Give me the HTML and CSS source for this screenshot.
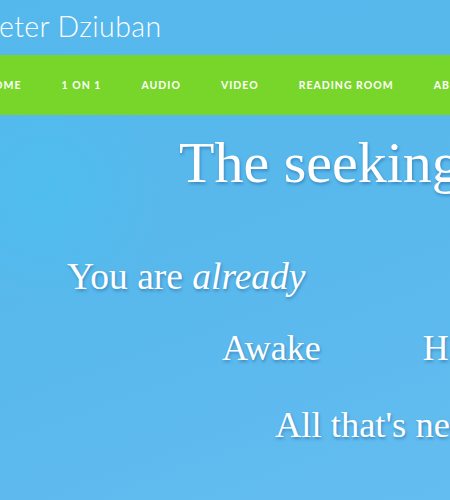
FILE: index.html
```html
<!DOCTYPE html>
<html lang="en">
<head>
<meta charset="utf-8">
<title>Peter Dziuban</title>
<link rel="stylesheet" href="styles.css">
</head>
<body>
<div class="page">
  <header class="top">
    <span class="brand">Peter Dziuban</span>
  </header>
  <nav class="menu">
    <a class="menu-item" href="#">Home</a>
    <a class="menu-item" href="#">1 on 1</a>
    <a class="menu-item" href="#">Audio</a>
    <a class="menu-item" href="#">Video</a>
    <a class="menu-item" href="#">Reading Room</a>
    <a class="menu-item" href="#">About</a>
  </nav>
  <main class="hero">
    <h1 class="title">The seeking is the finding</h1>
    <p class="line line-one">You are <em>already</em></p>
    <p class="line line-two"><span>Awake</span><span>Happy</span><span>Free</span></p>
    <p class="line line-three">All that's needed is to notice</p>
  </main>
</div>
</body>
</html>
```
FILE: styles.css
```css
html, body {
  margin: 0;
  padding: 0;
  height: 100%;
  overflow: hidden;
}

body {
  background-color: #59b8ec;
  background-image:
    radial-gradient(circle at 45px 190px, rgba(70, 195, 240, 0.5) 0, rgba(70, 195, 240, 0) 120px),
    linear-gradient(160deg, #55b8ec 0%, #59b8ec 55%, #64bdf1 100%);
  font-family: "Liberation Serif", serif;
  color: #ffffff;
}

.page {
  width: 1200px;
  margin-left: -17px;
}

.top {
  height: 55px;
  display: flex;
  align-items: flex-start;
}

.brand {
  font-family: Lato, "Open Sans", sans-serif;
  font-weight: 300;
  font-size: 28.5px;
  line-height: 28px;
  margin-top: 12px;
  letter-spacing: 0.4px;
  color: #ffffff;
}

.menu {
  height: 60px;
  background: #78d62a;
  display: flex;
  align-items: center;
  margin-left: -18px;
}

.menu-item {
  font-family: Lato, "Open Sans", sans-serif;
  font-weight: 700;
  font-size: 10.5px;
  letter-spacing: 1px;
  text-transform: uppercase;
  color: #ffffff;
  text-decoration: none;
  padding: 0 20px;
}

.hero {
  display: flex;
  flex-direction: column;
  align-items: flex-start;
  padding-top: 13px;
  text-shadow: 1px 2px 3px rgba(20, 80, 140, 0.45);
}

.title {
  margin: 0 0 0 196px;
  font-weight: 400;
  font-size: 58px;
  line-height: 70px;
  white-space: nowrap;
}

.line {
  margin: 0;
  font-size: 36px;
  line-height: 44px;
  white-space: nowrap;
}

.line-one {
  margin-top: 57px;
  margin-left: 84px;
  font-size: 37.5px;
}

.line-two {
  margin-top: 27px;
  margin-left: 239px;
  display: flex;
  gap: 102px;
}

.line-three {
  margin-top: 33px;
  margin-left: 292px;
  font-size: 36.5px;
}
```
